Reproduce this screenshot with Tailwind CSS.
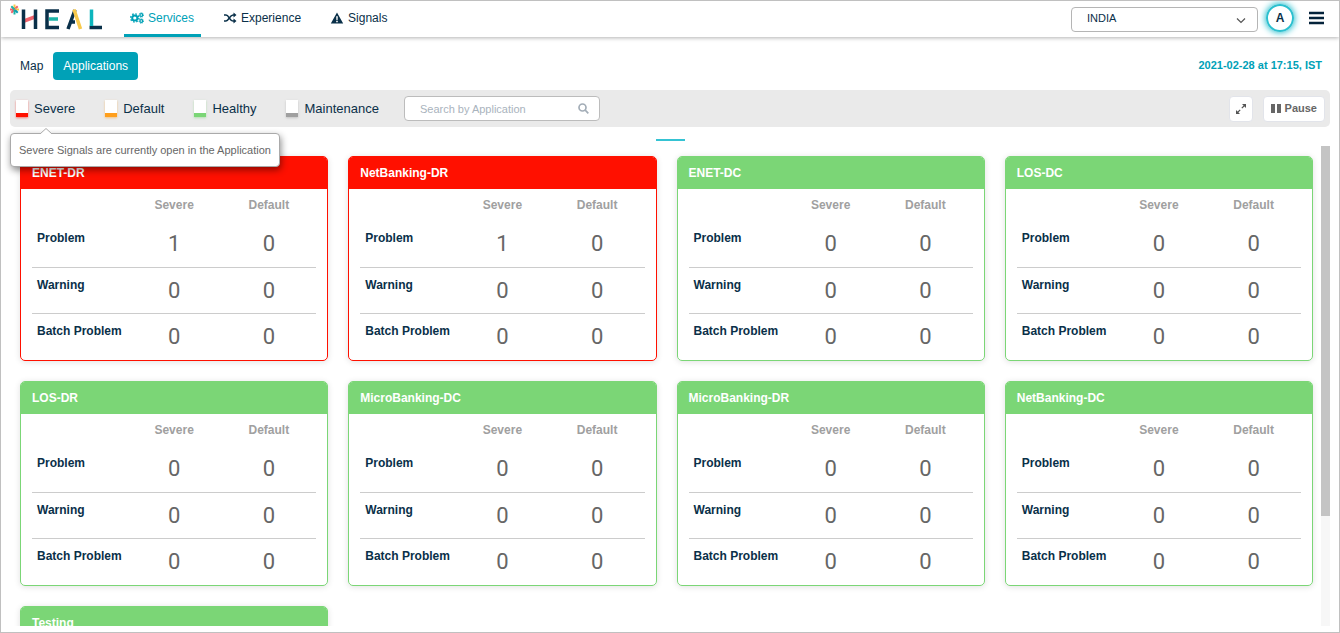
<!DOCTYPE html>
<html lang="en">
<head>
<meta charset="utf-8">
<title>HEAL – Applications</title>
<script src="https://cdn.jsdelivr.net/npm/@tailwindcss/browser@4"></script>
</head>
<body class="flex h-screen flex-col overflow-hidden border border-[#c0c0c0] bg-white font-['Liberation_Sans',sans-serif] text-[#0a3049]">

<header class="z-10 flex h-9 shrink-0 items-center bg-white pr-[15px] pl-2 shadow-[0_1px_4px_rgba(0,0,0,0.3)]">
  <a href="#" aria-label="HEAL home" class="block">
    <svg class="block h-[30px] w-24" viewBox="9 4 96 30" fill="none" stroke="#0a3049" stroke-width="3.500">
      <g stroke-width="2"><path d="M14.500 4.500V9" stroke="#f8c94c"/><path d="M10 9.500h4.500M17.700 6.300L11.300 12.700" stroke="#f0636c"/><path d="M11.300 6.300l3.200 3.200M14.500 10V14.500" stroke="#1bb5a8"/><path d="M15 9.500H19" stroke="#f8c94c"/><path d="M17.700 12.700l-2.700-2.700" stroke="#0a9bb0"/></g>
      <path d="M24 21L36 16.500" stroke="#f0636c"/><path d="M23.500 9.500V29M35.500 9.500V29"/>
      <path d="M59 11H47V27.500H59"/><path d="M49 19H58" stroke="#1bb5a8"/>
      <path d="M68 29L75 10M70 22H75"/><path d="M74 9.500L80.500 29" stroke="#f8c94c"/>
      <path d="M89.500 27.500H102"/><path d="M91.500 9.500V26" stroke="#0cb5bd"/>
    </svg>
  </a>
  <nav class="ml-[19px] flex h-full text-xs">
    <a href="#" class="flex h-full items-center gap-1 border-b-3 border-[#00a1b7] px-[7px] pl-1.5 text-[#00a1b7]">
      <svg class="h-3 w-3.5" viewBox="0 0 14 12" fill="none" stroke="currentColor"><circle cx="4.800" cy="6" r="2.600" stroke-width="2"/><circle cx="4.800" cy="6" r="4.100" stroke-width="1.400" stroke-dasharray="1.600 1.620"/><circle cx="11.300" cy="3" r="1.400" stroke-width="1.200"/><circle cx="11.300" cy="3" r="2.200" stroke-dasharray="1 .73"/><circle cx="11.300" cy="9" r="1.400" stroke-width="1.200"/><circle cx="11.300" cy="9" r="2.200" stroke-dasharray="1 .73"/></svg>
      Services</a>
    <a href="#" class="ml-4 flex h-full items-center gap-1 border-b-3 border-transparent px-1.5">
      <svg class="h-3 w-3.5" viewBox="0 0 14 12" fill="none" stroke="currentColor" stroke-width="1.600"><path d="M1 3h2c3 0 3.500 6 7 6h1M1 9h2c3 0 3.500-6 7-6h1"/><path d="M10.500.5L13.500 3l-3 2.500zM10.500 6.500l3 2.500-3 2.500z" fill="currentColor" stroke="none"/></svg>
      Experience</a>
    <a href="#" class="ml-4 flex h-full items-center gap-1 border-b-3 border-transparent px-[7px]">
      <svg class="h-3 w-3.5" viewBox="0 0 14 12"><path fill="currentColor" fill-rule="evenodd" d="M7 .5L13.200 11.500H.8zM6.200 4.200l.2 3.800h1.200l.2-3.800zM6.200 8.800v1.400h1.600V8.800z"/></svg>
      Signals</a>
  </nav>
  <div class="relative ml-auto">
    <select aria-label="Account" class="block h-[25px] w-[187px] appearance-none rounded-[4px] border border-[#b5b5b5] bg-white pr-8 pb-0.5 pl-[15px] text-[11px]"><option>INDIA</option></select>
    <svg class="pointer-events-none absolute top-2.5 right-3 h-2 w-2.5" viewBox="0 0 10 8" fill="none" stroke="#555" stroke-width="1.200"><path d="M1 1.500l4 4 4-4"/></svg>
  </div>
  <button aria-label="Profile" class="mb-0.5 ml-2 flex size-7 items-center justify-center rounded-full border-2 border-[#2cc0cf] text-xs font-bold shadow-[0_0_6px_1px_#2cc0cf]">A</button>
  <button aria-label="Menu" class="mb-0.5 ml-[15px]"><svg class="block h-3.5 w-[15px]" viewBox="0 0 15 14" stroke="#04233b" stroke-width="2.400"><path d="M0 2h15M0 7h15M0 12h15"/></svg></button>
</header>

<div class="flex h-[53px] shrink-0 items-center px-[17px] pt-1 pl-[19px] text-xs">
  <a href="#" class="mr-2.5">Map</a>
  <a href="#" class="flex h-7 items-center rounded-[4px] bg-[#00a1b7] px-2.5 text-white">Applications</a>
  <time class="ml-auto text-[11px] font-bold text-[#00a1b7]">2021-02-28 at 17:15, IST</time>
</div>

<form class="relative z-10 mx-[9px] flex h-[37px] shrink-0 items-center rounded-[5px] bg-[#eaeaea] pr-[5px] pl-1.5 text-[13px]" onsubmit="return false">
  <label class="mr-[30px] flex items-center gap-1.5"><input type="checkbox" class="h-[17px] w-3 appearance-none border-b-4 border-[#ff1000] bg-white shadow-[0_1px_2px_#ff100080]">Severe</label>
  <label class="mr-[30px] flex items-center gap-1.5"><input type="checkbox" class="h-[17px] w-3 appearance-none border-b-4 border-[#ff9f1c] bg-white shadow-[0_1px_2px_#ff9f1c80]">Default</label>
  <label class="mr-[30px] flex items-center gap-1.5"><input type="checkbox" class="h-[17px] w-3 appearance-none border-b-4 border-[#7bd676] bg-white shadow-[0_1px_2px_#7bd67680]">Healthy</label>
  <label class="mr-[25px] flex items-center gap-1.5"><input type="checkbox" class="h-[17px] w-3 appearance-none border-b-4 border-[#a0a0a0] bg-white shadow-[0_1px_2px_#a0a0a080]">Maintenance</label>
  <div class="relative">
    <input type="search" aria-label="Search by Application" placeholder="Search by Application" class="block h-[25px] w-[196px] rounded-[4px] border border-[#bcbcbc] bg-white pr-8 pl-[15px] text-[11px] placeholder:text-[#a9b3bd]">
    <svg class="absolute top-[7px] right-[11px] size-[11px]" viewBox="0 0 11 11" fill="none" stroke="#a3adb7" stroke-width="1.700"><circle cx="4.500" cy="4.500" r="3.500"/><path d="M7.200 7.200L10.300 10.300"/></svg>
  </div>
  <button aria-label="Expand" class="ml-auto flex h-[26px] w-6 items-center justify-center rounded-[4px] border border-[#e2e4ea] bg-white"><svg class="size-2.5" viewBox="0 0 10 10" stroke="#555" fill="#555" stroke-width="1.200"><path d="M5.800 4.200L8.500 1.500M4.200 5.800L1.500 8.500"/><path stroke="none" d="M6 0h4v4zM0 6v4h4z"/></svg></button>
  <button class="ml-[10px] flex h-[26px] items-center gap-1 rounded-[4px] border border-[#e2e4ea] bg-white px-[7px] text-[11px] font-bold text-[#666]"><svg class="h-[9px] w-2.5" viewBox="0 0 10 9" fill="#666"><path d="M0 0h4v9H0zM6 0h4v9H6z"/></svg>Pause</button>
  <div role="tooltip" class="absolute top-[43px] left-0 flex h-[34px] items-center rounded-[4px] border border-[#aaa] bg-white px-2 text-[11px] whitespace-nowrap text-[#666] shadow-[1px_3px_7px_rgba(0,0,0,0.45)]">
    <svg class="absolute -top-[6px] left-[29px] h-[6px] w-3" viewBox="0 0 12 6"><path d="M0 6L6 .5 12 6" fill="#fff" stroke="#aaa"/></svg>
    Severe Signals are currently open in the Application</div>
</form>

<div class="mx-auto mt-3 h-[2px] w-[29px] shrink-0 bg-[#35c3d3]"></div>

<main class="mt-[5px] mr-[9px] mb-1.5 flex min-h-0 flex-1">
  <div id="cards" class="grid min-h-0 flex-1 auto-rows-max grid-cols-4 gap-5 overflow-hidden pt-2.5 pr-2 pl-[19px]"></div>
  <div class="w-[9px] bg-[#f7f7f7]"><div class="h-[77%] bg-[#c4c4c4]"></div></div>
</main>

<script>
const apps = [
  ['ENET-DR', 1], ['NetBanking-DR', 1], ['ENET-DC', 0], ['LOS-DC', 0],
  ['LOS-DR', 0], ['MicroBanking-DC', 0], ['MicroBanking-DR', 0], ['NetBanking-DC', 0],
  ['Testing', 0],
];
const row = (label, severe, line) => `
  <tr class="h-[46px] ${line}">
    <th scope="row" class="pt-[9px] pl-[5px] text-left align-top text-xs font-bold">${label}</th>
    <td class="font-['Roboto',sans-serif] text-[22px] text-[#666]">${severe}</td>
    <td class="font-['Roboto',sans-serif] text-[22px] text-[#666]">0</td>
  </tr>`;
document.getElementById('cards').innerHTML = apps.map(([name, severe]) => `
  <section class="overflow-hidden rounded-[5px] border pb-px shadow-[0_1px_6px_rgba(0,0,0,0.12)] ${severe ? 'border-[#ff1000]' : 'border-[#7bd676]'}">
    <h2 class="flex h-8 items-center px-[11px] text-xs font-bold text-white ${severe ? 'bg-[#ff1000]' : 'bg-[#7bd676]'}">${name}</h2>
    <div class="px-[11px]">
      <table class="w-full table-fixed border-collapse text-center">
        <thead><tr class="h-8 text-xs text-[#a0a0a0]"><td></td><th scope="col">Severe</th><th scope="col">Default</th></tr></thead>
        <tbody>${row('Problem', severe, 'border-b border-[#ccc]')}${row('Warning', 0, 'border-b border-[#ccc]')}${row('Batch Problem', 0, '')}</tbody>
      </table>
    </div>
  </section>`).join('');
</script>
</body>
</html>
